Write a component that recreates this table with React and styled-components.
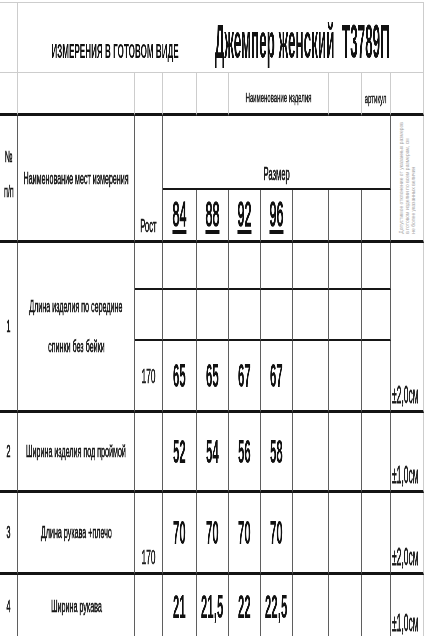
import React from 'react';
import styled, { createGlobalStyle } from 'styled-components';

const GlobalStyle = createGlobalStyle`
  * { box-sizing: border-box; }
  body {
    margin: 0;
    background: #fff;
    overflow: hidden;
    font-family: "Liberation Sans", Arial, sans-serif;
    color: #111;
    -webkit-font-smoothing: antialiased;
  }
`;

const lines = {
  none: 'none',
  light: '1px solid #cdcdcd',
  thin: '1px solid #5f5f5f',
  mid: '2px solid #161616',
  thick: '3px solid #141414',
};

const Sheet = styled.div`
  width: 424px;
  display: grid;
  grid-template-columns: 18px 117px 28px 34px 32px 32px 32px 36px 33px 29px 33px;
  grid-template-rows: 71px 43px 74px 53px 47px 51px 72px 80px 82px 63px;
  padding-top: 2px;
  background: #fff;
`;

const Cell = styled.div`
  grid-column: ${p => p.$col};
  grid-row: ${p => p.$row};
  display: flex;
  flex-direction: column;
  align-items: ${p => p.$ax || 'center'};
  justify-content: ${p => p.$ay || 'center'};
  border-top: ${p => lines[p.$t || 'none']};
  border-right: ${p => lines[p.$r || 'thin']};
  border-bottom: ${p => lines[p.$b || 'none']};
  padding-bottom: ${p => p.$pb || 0}px;
  padding-left: ${p => p.$pl || 0}px;
  overflow: visible;
  min-width: 0;
`;

// all text in the sheet is strongly condensed
const Squeezed = styled.span`
  display: inline-block;
  white-space: nowrap;
  line-height: 1;
  transform-origin: center;
  will-change: transform;
  font-family: "Liberation Sans", Arial, sans-serif;
`;

const TitleRow = styled.div`
  display: flex;
  align-items: baseline;
  padding-top: 14px;
`;

const Slot = styled.div`
  width: ${p => p.$w}px;
  display: flex;
  justify-content: center;
`;

const Heading = styled(Squeezed)`
  font-size: 21px;
  font-weight: 700;
  transform: scaleX(0.386);
`;

const Product = styled(Squeezed)`
  font-size: 49px;
  font-weight: 700;
  transform: scaleX(0.275);
`;

const Caption = styled(Squeezed)`
  font-size: 13px;
  color: #222;
  -webkit-text-stroke: 0.5px #222;
  transform: scaleX(0.46);
`;

const Label = styled(Squeezed)`
  font-size: 17px;
  color: #1a1a1a;
  -webkit-text-stroke: 0.7px #1a1a1a;
  transform: scaleX(0.42);
`;

const LabelLines = styled.div`
  display: flex;
  flex-direction: column;
  align-items: center;
  gap: ${p => p.$gap || 0}px;
`;

const HeadText = styled(Squeezed)`
  font-size: 19px;
  color: #1a1a1a;
  -webkit-text-stroke: 0.7px #1a1a1a;
  transform: scaleX(0.4);
`;

const Index = styled(Squeezed)`
  font-size: 16px;
  color: #1a1a1a;
  -webkit-text-stroke: 0.7px #1a1a1a;
  transform: scaleX(0.45);
`;

const SizeNum = styled(Squeezed)`
  font-size: 35px;
  color: #111;
  -webkit-text-stroke: 1.4px #111;
  transform: scaleX(0.36);
  text-decoration: underline;
  text-decoration-thickness: 4px;
  text-underline-offset: 4px;
`;

const Value = styled(Squeezed)`
  font-size: 33px;
  font-weight: 700;
  transform: scaleX(0.35);
`;

const Height = styled(Squeezed)`
  font-size: 21px;
  color: #222;
  -webkit-text-stroke: 0.6px #222;
  transform: scaleX(0.4);
`;

const Tolerance = styled(Squeezed)`
  font-size: 23px;
  color: #1a1a1a;
  -webkit-text-stroke: 0.8px #1a1a1a;
  transform-origin: left;
  transform: scaleX(0.37);
`;

const Vertical = styled.div`
  display: flex;
  gap: 1px;
  transform: rotate(180deg);
`;

const VerticalLine = styled.span`
  writing-mode: vertical-rl;
  font-size: 5px;
  line-height: 5px;
  color: #a5a5a5;
  white-space: nowrap;
`;

const sizes = ['84', '88', '92', '96', '', '', ''];

const rows = [
  { n: '2', label: 'Ширина изделия под проймой', values: ['52', '54', '56', '58'], tol: '±1,0см', row: 8 },
  { n: '3', label: 'Длина рукава +плечо', rost: '170', values: ['70', '70', '70', '70'], tol: '±2,0см', row: 9 },
  { n: '4', label: 'Ширина рукава', values: ['21', '21,5', '22', '22,5'], tol: '±1,0см', row: 10, last: true },
];

const valueCells = (values, row, bottom) =>
  [0, 1, 2, 3, 4, 5, 6].map(i => (
    <Cell key={i} $col={4 + i} $row={row} $b={bottom}>
      {values[i] ? <Value>{values[i]}</Value> : null}
    </Cell>
  ));

export default function App() {
  return (
    <>
      <GlobalStyle />
      <Sheet>
        {/* top header */}
        <Cell $col={1} $row={1} $t="light" $r="light" $b="light" />
        <Cell $col="2 / 12" $row={1} $t="light" $r="light" $b="light" $ay="flex-start" $ax="flex-start">
          <TitleRow>
            <Slot $w={195}><Heading>ИЗМЕРЕНИЯ В ГОТОВОМ ВИДЕ</Heading></Slot>
            <Slot $w={179}><Product>Джемпер женский&nbsp;&nbsp;Т3789П</Product></Slot>
          </TitleRow>
        </Cell>

        <Cell $col={1} $row={2} $r="light" $b="thick" />
        <Cell $col={2} $row={2} $r="light" $b="thick" />
        <Cell $col={3} $row={2} $r="light" $b="thick" />
        <Cell $col={4} $row={2} $r="light" $b="thick" />
        <Cell $col={5} $row={2} $r="light" $b="thick" />
        <Cell $col="6 / 9" $row={2} $r="light" $b="thick" $ay="flex-end" $pb={9}>
          <Caption>Наименование изделия</Caption>
        </Cell>
        <Cell $col={9} $row={2} $r="light" $b="thick" />
        <Cell $col={10} $row={2} $r="light" $b="thick" $ay="flex-end" $pb={8}>
          <Caption>артикул</Caption>
        </Cell>
        <Cell $col={11} $row={2} $r="light" $b="thick" />

        {/* table head */}
        <Cell $col={1} $row="3 / 5" $b="thick" $pb={8}>
          <LabelLines $gap={19}>
            <Index>№</Index>
            <Index>п/п</Index>
          </LabelLines>
        </Cell>
        <Cell $col={2} $row="3 / 5" $b="thick">
          <Label>Наименование мест измерения</Label>
        </Cell>
        <Cell $col={3} $row="3 / 5" $b="thick" $ay="flex-end" $pb={5}>
          <HeadText>Рост</HeadText>
        </Cell>
        <Cell $col="4 / 11" $row={3} $b="mid" $ay="flex-end" $pb={5}>
          <HeadText>Размер</HeadText>
        </Cell>
        {sizes.map((s, i) => (
          <Cell key={i} $col={4 + i} $row={4} $b="thick" $ay="flex-end" $pb={9}>
            {s ? <SizeNum>{s}</SizeNum> : null}
          </Cell>
        ))}
        <Cell $col={11} $row="3 / 5" $r="light" $b="thick">
          <Vertical>
            <VerticalLine>не более указанных величин</VerticalLine>
            <VerticalLine>в готовом изделии по всем размерам, см</VerticalLine>
            <VerticalLine>Допустимое отклонение от указанных размеров</VerticalLine>
          </Vertical>
        </Cell>

        {/* row 1 */}
        <Cell $col={1} $row="5 / 8" $b="thick">
          <Index>1</Index>
        </Cell>
        <Cell $col={2} $row="5 / 8" $b="thick">
          <LabelLines $gap={23}>
            <Label>Длина изделия по середине</Label>
            <Label>спинки без бейки</Label>
          </LabelLines>
        </Cell>
        <Cell $col={3} $row={5} $b="mid" />
        {valueCells([], 5, 'mid')}
        <Cell $col={3} $row={6} $b="mid" />
        {valueCells([], 6, 'mid')}
        <Cell $col={3} $row={7} $b="thick">
          <Height>170</Height>
        </Cell>
        {valueCells(['65', '65', '67', '67'], 7, 'thick')}
        <Cell $col={11} $row="5 / 8" $r="light" $b="thick" $ay="flex-end" $ax="flex-start" $pb={3} $pl={1}>
          <Tolerance>±2,0см</Tolerance>
        </Cell>

        {rows.map(r => {
          const b = r.last ? 'none' : 'thick';
          return (
            <React.Fragment key={r.n}>
              <Cell $col={1} $row={r.row} $b={b}>
                <Index>{r.n}</Index>
              </Cell>
              <Cell $col={2} $row={r.row} $b={b}>
                <Label>{r.label}</Label>
              </Cell>
              <Cell $col={3} $row={r.row} $b={b} $ay="flex-end" $pb={5}>
                {r.rost ? <Height>{r.rost}</Height> : null}
              </Cell>
              {valueCells(r.values, r.row, b)}
              <Cell $col={11} $row={r.row} $r="light" $b={b} $ay="flex-end" $ax="flex-start" $pb={3} $pl={1}>
                <Tolerance>{r.tol}</Tolerance>
              </Cell>
            </React.Fragment>
          );
        })}
      </Sheet>
    </>
  );
}
